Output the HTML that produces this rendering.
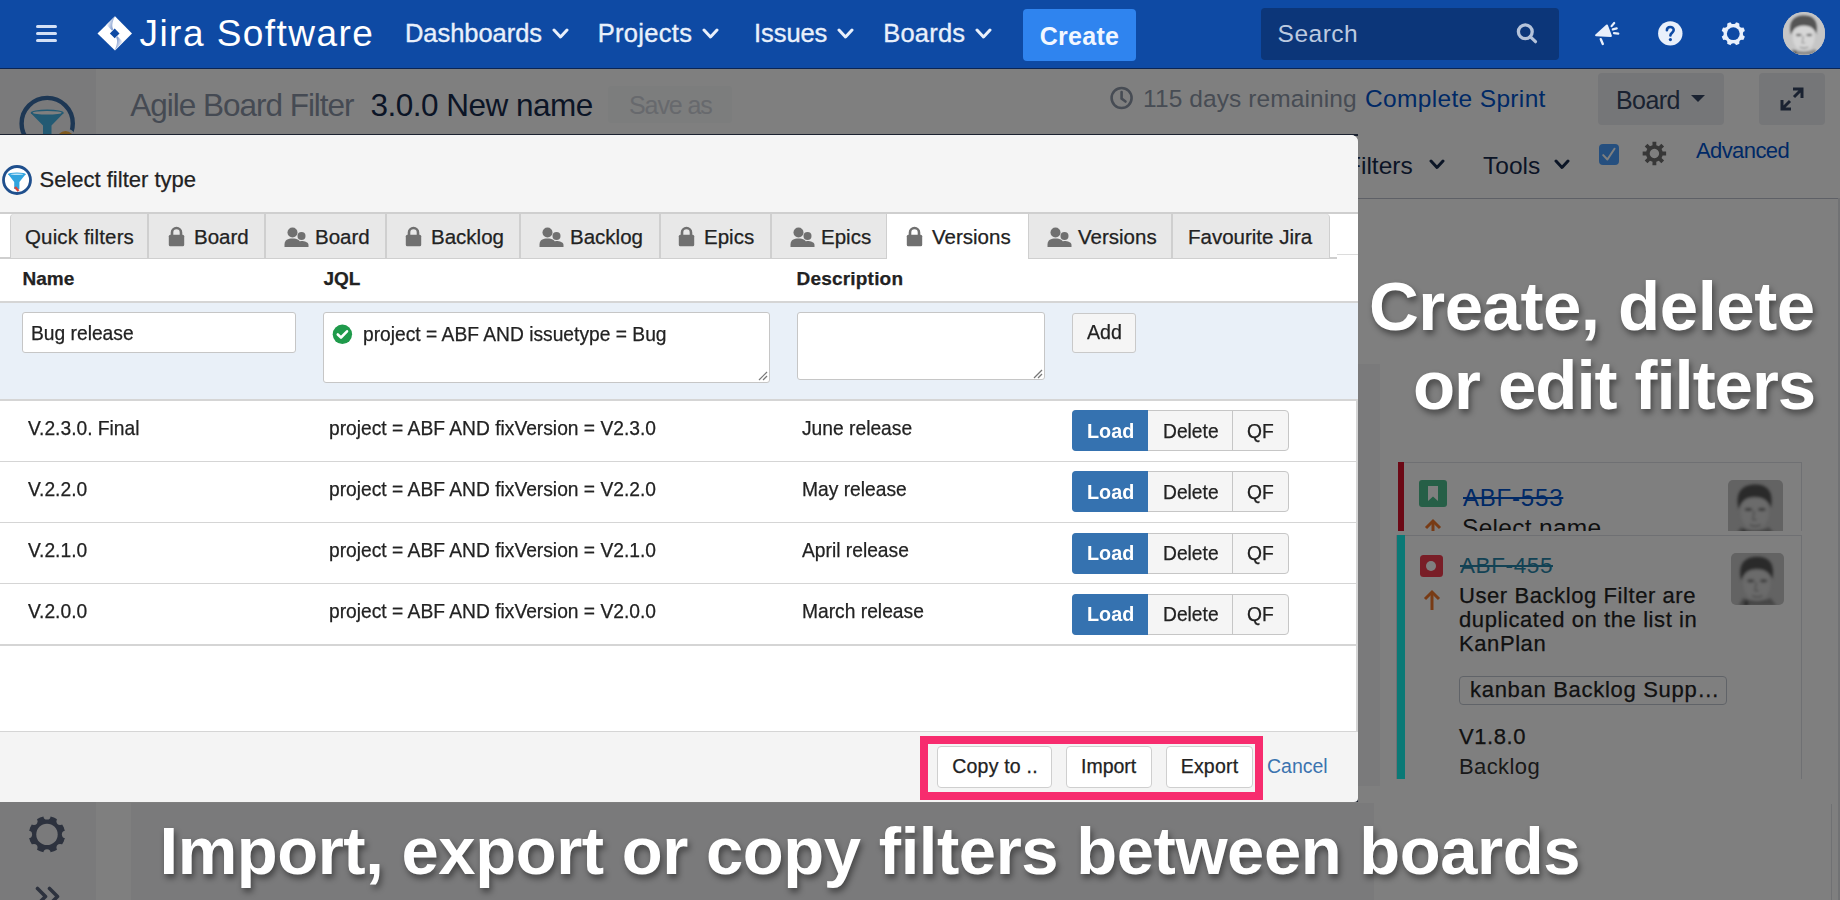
<!DOCTYPE html>
<html><head><meta charset="utf-8">
<style>
*{box-sizing:border-box;margin:0;padding:0}
html,body{width:1840px;height:900px;overflow:hidden;background:#fff;font-family:"Liberation Sans",sans-serif}
.t{position:absolute;line-height:1;white-space:nowrap}
.d .t, .t.d{-webkit-text-stroke:0.25px currentColor}
.r{position:absolute;display:block}
</style></head><body>
<div class="r" style="left:0px;top:69px;width:1840px;height:831px;background:#fff"></div>
<div class="r" style="left:0px;top:69px;width:96px;height:831px;background:#f4f5f7"></div>
<svg class="r" style="left:14px;top:90px;" width="70" height="50" viewBox="0 0 70 50"><circle cx="33.2" cy="33.5" r="25.6" fill="none" stroke="#3b6ea8" stroke-width="4.4"/><path d="M16.7,23 L49.7,23 L37.5,35.5 L37.5,50 L29,50 L29,35.5 Z" fill="#46b4e6"/><ellipse cx="33.2" cy="22.8" rx="16.5" ry="3.2" fill="#46b4e6"/><ellipse cx="33.2" cy="22.8" rx="14.5" ry="1.8" fill="#fff"/><circle cx="51.5" cy="49.5" r="9.8" fill="#ffb43c" stroke="#f4f5f7" stroke-width="2.5"/><path d="M29,44 L34,50 L29,50 Z" fill="#e8503a"/></svg>
<div class="t" style="left:130.3px;top:89.94px;font-size:31.5px;color:#8b95a6;font-weight:normal;letter-spacing:-1.02px;">Agile Board Filter</div>
<div class="t" style="left:370.5px;top:89.94px;font-size:31.5px;color:#172b4d;font-weight:normal;letter-spacing:-0.5px;">3.0.0 New name</div>
<div class="r" style="left:608px;top:86px;width:124px;height:37px;background:#f9fafb;border-radius:3px"></div>
<div class="t" style="left:629px;top:93.44px;font-size:25px;color:#cfd3da;font-weight:normal;letter-spacing:-1.1px;">Save as</div>
<svg class="r" style="left:1108px;top:85px;" width="28" height="26" viewBox="0 0 28 26"><circle cx="13.6" cy="13" r="10" fill="none" stroke="#8e98a8" stroke-width="2.6"/><polyline points="13.6,7 13.6,13.5 17.5,16.5" fill="none" stroke="#8e98a8" stroke-width="2.6" stroke-linecap="round"/></svg>
<div class="t" style="left:1143px;top:87.06px;font-size:24.5px;color:#8e98a8;font-weight:normal;letter-spacing:0.1px;">115 days remaining</div>
<div class="t" style="left:1365px;top:87.06px;font-size:24.5px;color:#0052cc;font-weight:normal;letter-spacing:0.34px;">Complete Sprint</div>
<div class="r" style="left:1598px;top:73px;width:126px;height:52px;background:#ebecf0;border-radius:4px"></div>
<div class="t" style="left:1616px;top:88.34px;font-size:25px;color:#344563;font-weight:normal;letter-spacing:-0.6px;">Board</div>
<svg class="r" style="left:1690px;top:94px;" width="16" height="9" viewBox="0 0 16 9"><polygon points="1,1 15,1 8,8" fill="#344563"/></svg>
<div class="r" style="left:1759px;top:73px;width:66px;height:52px;background:#ebecf0;border-radius:4px"></div>
<svg class="r" style="left:1778px;top:85px;" width="28" height="28" viewBox="0 0 28 28"><path d="M15,4 L24,4 L24,13 M24,4 L16,12 M4,15 L4,24 L13,24 M4,24 L12,16" fill="none" stroke="#344563" stroke-width="3"/></svg>
<div class="t" style="left:1346px;top:153.76px;font-size:24.5px;color:#172b4d;font-weight:normal;">Filters</div>
<svg class="r" style="left:1429px;top:159px;" width="16" height="11" viewBox="0 0 16 11"><polyline points="2,2 8.0,8.5 14,2" fill="none" stroke="#172b4d" stroke-width="3" stroke-linecap="round" stroke-linejoin="round"/></svg>
<div class="t" style="left:1483px;top:153.76px;font-size:24.5px;color:#172b4d;font-weight:normal;">Tools</div>
<svg class="r" style="left:1554px;top:159px;" width="16" height="11" viewBox="0 0 16 11"><polyline points="2,2 8.0,8.5 14,2" fill="none" stroke="#172b4d" stroke-width="3" stroke-linecap="round" stroke-linejoin="round"/></svg>
<div class="r" style="left:1598.8px;top:143.8px;width:20.6px;height:21.1px;background:#4a9fff;border-radius:4px"></div>
<svg class="r" style="left:1598px;top:143px;" width="22" height="22" viewBox="0 0 22 22"><polyline points="5.2,12.1 9.4,16.5 16.5,5.7" fill="none" stroke="#fff" stroke-width="2" stroke-linecap="round" stroke-linejoin="round"/></svg>
<svg class="r" style="left:1641px;top:140px;" width="27" height="27" viewBox="0 0 27 27"><path d="M21.16,10.29 L21.58,11.60 L25.14,11.55 L25.14,15.45 L21.58,15.40 L21.16,16.71 L20.53,17.95 L23.08,20.42 L20.32,23.18 L17.85,20.63 L16.61,21.26 L15.30,21.68 L15.35,25.24 L11.45,25.24 L11.50,21.68 L10.19,21.26 L8.95,20.63 L6.48,23.18 L3.72,20.42 L6.27,17.95 L5.64,16.71 L5.22,15.40 L1.66,15.45 L1.66,11.55 L5.22,11.60 L5.64,10.29 L6.27,9.05 L3.72,6.58 L6.48,3.82 L8.95,6.37 L10.19,5.74 L11.50,5.32 L11.45,1.76 L15.35,1.76 L15.30,5.32 L16.61,5.74 L17.85,6.37 L20.32,3.82 L23.08,6.58 L20.53,9.05 Z M13.4,8.8 A4.7,4.7 0 1,0 13.41,8.8 Z" fill="#6e6e6e" fill-rule="evenodd"/></svg>
<div class="t" style="left:1696px;top:139.78px;font-size:22px;color:#0052cc;font-weight:normal;letter-spacing:-0.6px;">Advanced</div>
<div class="r" style="left:1357px;top:364px;width:23px;height:422px;background:#f4f5f7"></div>
<div class="r" style="left:1380px;top:198px;width:460px;height:588px;background:#fff"></div>
<div class="r" style="left:1357px;top:197.5px;width:483px;height:1.5px;background:#bcc1cc"></div>
<div class="r" style="left:1398px;top:462px;width:404px;height:69px;background:#fff;border:1px solid #dfe1e6;border-bottom:none"></div>
<div class="r" style="left:1398px;top:462px;width:6px;height:69px;background:#d8102a"></div>
<div class="r" style="left:1419px;top:480px;width:28px;height:27px;background:#4cbf8f;border-radius:3px"></div>
<svg class="r" style="left:1419px;top:480px;" width="28" height="27" viewBox="0 0 28 27"><path d="M9,6 L19,6 L19,21 L14,16.5 L9,21 Z" fill="#fff"/></svg>
<div class="t" style="left:1463px;top:485.68px;font-size:24px;color:#0052cc;font-weight:normal;letter-spacing:0.8px;text-decoration:line-through;">ABF-553</div>
<svg class="r" style="left:1422px;top:517px;" width="22" height="14" viewBox="0 0 22 14"><polyline points="4,11 11,4 18,11" fill="none" stroke="#f0772a" stroke-width="3"/><line x1="11" y1="4" x2="11" y2="20" stroke="#f0772a" stroke-width="3"/></svg>
<div class="r" style="left:1462px;top:517px;width:250px;height:14px;overflow:hidden"><div class="t" style="left:0;top:-1px;font-size:24.5px;color:#222;letter-spacing:0.3px">Select name</div></div>
<div class="r" style="left:1728px;top:480px;width:55px;height:51px;overflow:hidden;border-radius:5px 5px 0 0"><div style="width:55px;height:55px"><svg width="55" height="55" viewBox="0 0 43 43" preserveAspectRatio="xMidYMid slice" style="display:block"><defs><filter id="avb1" x="-20%" y="-20%" width="140%" height="140%"><feGaussianBlur stdDeviation="1.3"/></filter></defs><rect width="43" height="43" fill="#c6c6c6"/><g filter="url(#avb1)"><ellipse cx="21" cy="25" rx="11" ry="14" fill="#d6d6d6"/><path d="M8.5,23 C5,10 11,3.5 21,3.5 C31,3.5 36,9 33.5,22 C32,17 28,13.5 21,13.5 C14,13.5 10,17 8.5,23 Z" fill="#555"/><ellipse cx="16" cy="23" rx="3" ry="1.3" fill="#6e6e6e"/><ellipse cx="26.5" cy="23" rx="3" ry="1.3" fill="#6e6e6e"/><path d="M20.5,24 L19.5,31 L22.5,31" stroke="#999" stroke-width="1.2" fill="none"/><path d="M17,35 C19.5,36.5 23,36.5 25.5,35" stroke="#8a8a8a" stroke-width="1.3" fill="none"/><path d="M6,43 L10,37 C15,40 27,40 32,37 L37,43 Z" fill="#8c8c8c"/><path d="M10,43 L12.5,38 L14.5,43 Z" fill="#444"/></g></svg></div></div>
<div class="r" style="left:1396px;top:535px;width:406px;height:244px;background:#fff;border:1px solid #dfe1e6;border-bottom:none"></div>
<div class="r" style="left:1397px;top:535px;width:8px;height:244px;background:#14f2ec"></div>
<div class="r" style="left:1420px;top:554.5px;width:22.5px;height:22.5px;background:#f23c4e;border-radius:3.5px"></div>
<div class="r" style="left:1426px;top:561px;width:10px;height:10px;background:#fff;border-radius:50%"></div>
<div class="t" style="left:1460px;top:554.95px;font-size:22.5px;color:#2684a8;font-weight:normal;letter-spacing:0.6px;text-decoration:line-through;">ABF-455</div>
<svg class="r" style="left:1422px;top:589px;" width="20" height="22" viewBox="0 0 20 22"><polyline points="3,10 10,3 17,10" fill="none" stroke="#f0772a" stroke-width="3"/><line x1="10" y1="3" x2="10" y2="21" stroke="#f0772a" stroke-width="3"/></svg>
<div class="t d" style="left:1459px;top:585.38px;font-size:22px;color:#222;font-weight:normal;letter-spacing:0.58px;">User Backlog Filter are</div>
<div class="t d" style="left:1459px;top:609.38px;font-size:22px;color:#222;font-weight:normal;letter-spacing:0.58px;">duplicated on the list in</div>
<div class="t d" style="left:1459px;top:633.38px;font-size:22px;color:#222;font-weight:normal;letter-spacing:0.58px;">KanPlan</div>
<div class="r" style="left:1731px;top:553px;width:53px;height:52px;overflow:hidden;border-radius:5px"><svg width="53" height="52" viewBox="0 0 43 43" preserveAspectRatio="xMidYMid slice" style="display:block"><defs><filter id="avb2" x="-20%" y="-20%" width="140%" height="140%"><feGaussianBlur stdDeviation="1.3"/></filter></defs><rect width="43" height="43" fill="#c6c6c6"/><g filter="url(#avb2)"><ellipse cx="21" cy="25" rx="11" ry="14" fill="#d6d6d6"/><path d="M8.5,23 C5,10 11,3.5 21,3.5 C31,3.5 36,9 33.5,22 C32,17 28,13.5 21,13.5 C14,13.5 10,17 8.5,23 Z" fill="#555"/><ellipse cx="16" cy="23" rx="3" ry="1.3" fill="#6e6e6e"/><ellipse cx="26.5" cy="23" rx="3" ry="1.3" fill="#6e6e6e"/><path d="M20.5,24 L19.5,31 L22.5,31" stroke="#999" stroke-width="1.2" fill="none"/><path d="M17,35 C19.5,36.5 23,36.5 25.5,35" stroke="#8a8a8a" stroke-width="1.3" fill="none"/><path d="M6,43 L10,37 C15,40 27,40 32,37 L37,43 Z" fill="#8c8c8c"/><path d="M10,43 L12.5,38 L14.5,43 Z" fill="#444"/></g></svg></div>
<div class="r" style="left:1459px;top:676px;width:268px;height:29px;background:#fff;border:1.5px solid #c1c7d0;border-radius:4px"></div>
<div class="t d" style="left:1470px;top:679.38px;font-size:22px;color:#222;font-weight:normal;letter-spacing:0.7px;">kanban Backlog Supp…</div>
<div class="t d" style="left:1459px;top:726.18px;font-size:22px;color:#222;font-weight:normal;letter-spacing:0.58px;">V1.8.0</div>
<div class="r" style="left:1459px;top:750px;width:200px;height:29px;overflow:hidden"><div class="t" style="left:0;top:6.4px;font-size:22px;color:#333;letter-spacing:0.4px">Backlog</div></div>
<div class="r" style="left:1838px;top:198px;width:1.5px;height:702px;background:#e2e4e8"></div>
<div class="r" style="left:131px;top:803px;width:1243px;height:97px;background:#f4f5f7"></div>
<div class="r" style="left:1831px;top:804px;width:1.2px;height:96px;background:#e0e2e6"></div>
<svg class="r" style="left:27px;top:814px;" width="40" height="40" viewBox="0 0 40 40"><defs><mask id="gm1"><rect x="0" y="0" width="200" height="200" fill="#fff"/><circle cx="20.00" cy="1.90" r="3.6" fill="#000"/><circle cx="33.08" cy="7.32" r="3.6" fill="#000"/><circle cx="38.50" cy="20.40" r="3.6" fill="#000"/><circle cx="33.08" cy="33.48" r="3.6" fill="#000"/><circle cx="20.00" cy="38.90" r="3.6" fill="#000"/><circle cx="6.92" cy="33.48" r="3.6" fill="#000"/><circle cx="1.50" cy="20.40" r="3.6" fill="#000"/><circle cx="6.92" cy="7.32" r="3.6" fill="#000"/><circle cx="20" cy="20.4" r="10.7" fill="#000"/></mask></defs><circle cx="20" cy="20.4" r="18.2" fill="#5a647c" mask="url(#gm1)"/></svg>
<svg class="r" style="left:33px;top:884px;" width="30" height="16" viewBox="0 0 30 16"><polyline points="4.5,4.5 12.5,12.5 4.5,20.5" fill="none" stroke="#5a647c" stroke-width="3.6" stroke-linecap="round" stroke-linejoin="round"/><polyline points="16.5,4.5 24.5,12.5 16.5,20.5" fill="none" stroke="#5a647c" stroke-width="3.6" stroke-linecap="round" stroke-linejoin="round"/></svg>
<div class="r" style="left:0px;top:69px;width:1840px;height:831px;background:rgba(0,0,0,0.5)"></div>
<div class="r" style="left:0px;top:0px;width:1840px;height:69px;background:#0e4aa4;border-bottom:1px solid #0b2553"></div>
<div class="r" style="left:36px;top:25px;width:21px;height:3.4px;background:#d3e0f6;border-radius:2px"></div>
<div class="r" style="left:36px;top:32px;width:21px;height:3.4px;background:#d3e0f6;border-radius:2px"></div>
<div class="r" style="left:36px;top:39px;width:21px;height:3.4px;background:#d3e0f6;border-radius:2px"></div>
<svg class="r" style="left:96px;top:15px;" width="38" height="38" viewBox="0 0 38 38"><defs><linearGradient id="lg1" gradientUnits="userSpaceOnUse" x1="17.5" y1="11" x2="10.5" y2="9"><stop offset="0" stop-color="#7d98cc"/><stop offset="1" stop-color="#fff"/></linearGradient><linearGradient id="lg2" gradientUnits="userSpaceOnUse" x1="19.9" y1="25.8" x2="26.9" y2="27.8"><stop offset="0" stop-color="#7d98cc"/><stop offset="1" stop-color="#fff"/></linearGradient></defs><polygon points="19,1.2 36,18.4 19,35.6 1.5,18.4" fill="#fff"/><path d="M19,1.2 L10.5,9.7 L15.9,15.6 L17.2,14.3 C16,12 15.5,8 19,1.2 Z" fill="url(#lg1)"/><path d="M18.4,35.6 L26.9,27.1 L21.5,21.2 L20.2,22.5 C21.4,24.8 21.9,28.8 18.4,35.6 Z" fill="url(#lg2)"/><polygon points="18.7,13.6 23.5,18.4 18.7,23.2 13.9,18.4" fill="#0e4aa4"/></svg>
<div class="t" style="left:139.5px;top:15.28px;font-size:37px;color:#fff;font-weight:normal;letter-spacing:1.45px;">Jira Software</div>
<div class="t" style="left:405px;top:21.11px;font-size:25.5px;color:#e9f0fb;font-weight:normal;letter-spacing:-0.05px;-webkit-text-stroke:0.35px #e9f0fb;">Dashboards</div>
<svg class="r" style="left:552px;top:27.5px;" width="17" height="11.5" viewBox="0 0 17 11.5"><polyline points="2,2 8.5,9.0 15,2" fill="none" stroke="#e9f0fb" stroke-width="3" stroke-linecap="round" stroke-linejoin="round"/></svg>
<div class="t" style="left:597.7px;top:21.11px;font-size:25.5px;color:#e9f0fb;font-weight:normal;letter-spacing:0.3px;-webkit-text-stroke:0.35px #e9f0fb;">Projects</div>
<svg class="r" style="left:702px;top:27.5px;" width="17" height="11.5" viewBox="0 0 17 11.5"><polyline points="2,2 8.5,9.0 15,2" fill="none" stroke="#e9f0fb" stroke-width="3" stroke-linecap="round" stroke-linejoin="round"/></svg>
<div class="t" style="left:754.1px;top:21.11px;font-size:25.5px;color:#e9f0fb;font-weight:normal;letter-spacing:-0.1px;-webkit-text-stroke:0.35px #e9f0fb;">Issues</div>
<svg class="r" style="left:837px;top:27.5px;" width="17" height="11.5" viewBox="0 0 17 11.5"><polyline points="2,2 8.5,9.0 15,2" fill="none" stroke="#e9f0fb" stroke-width="3" stroke-linecap="round" stroke-linejoin="round"/></svg>
<div class="t" style="left:883.3px;top:21.11px;font-size:25.5px;color:#e9f0fb;font-weight:normal;letter-spacing:0.18px;-webkit-text-stroke:0.35px #e9f0fb;">Boards</div>
<svg class="r" style="left:975px;top:27.5px;" width="17" height="11.5" viewBox="0 0 17 11.5"><polyline points="2,2 8.5,9.0 15,2" fill="none" stroke="#e9f0fb" stroke-width="3" stroke-linecap="round" stroke-linejoin="round"/></svg>
<div class="r" style="left:1023px;top:9px;width:113px;height:52px;background:#2f84ef;border-radius:4px"></div>
<div class="t" style="left:1039.7px;top:24.34px;font-size:25px;color:#f2f7ff;font-weight:bold;letter-spacing:0.3px;">Create</div>
<div class="r" style="left:1261px;top:8px;width:298px;height:52px;background:#0c3679;border-radius:4px"></div>
<div class="t" style="left:1277.6px;top:22.36px;font-size:24.5px;color:#bccae0;font-weight:normal;letter-spacing:0.5px;">Search</div>
<svg class="r" style="left:1514px;top:23px;" width="26" height="24" viewBox="0 0 26 24"><circle cx="11.3" cy="8.7" r="6.9" fill="none" stroke="#b5c3da" stroke-width="3.3"/><line x1="16.2" y1="13.6" x2="21.5" y2="18.7" stroke="#b5c3da" stroke-width="3.2" stroke-linecap="round"/></svg>
<svg class="r" style="left:1593px;top:20px;" width="30" height="28" viewBox="0 0 30 28"><path d="M3.2,15.2 L13.9,5.6 L17.8,16 Z" fill="#e9f0fb" stroke="#e9f0fb" stroke-width="2.2" stroke-linejoin="round"/><line x1="7.8" y1="19.2" x2="9.8" y2="24" stroke="#e9f0fb" stroke-width="2.4" stroke-linecap="round"/><line x1="18.6" y1="6.1" x2="21.2" y2="3" stroke="#e9f0fb" stroke-width="2.2" stroke-linecap="round"/><line x1="19.8" y1="9.4" x2="23.7" y2="8.4" stroke="#e9f0fb" stroke-width="2.2" stroke-linecap="round"/><line x1="21" y1="13.1" x2="25.3" y2="13.7" stroke="#e9f0fb" stroke-width="2.2" stroke-linecap="round"/></svg>
<svg class="r" style="left:1656px;top:19px;" width="29" height="29" viewBox="0 0 29 29"><circle cx="14.3" cy="14.4" r="12.2" fill="#e9f0fb"/><path d="M10.9,11.3 C10.9,7 17.7,7 17.7,11.1 C17.7,13.6 14.4,13.8 14.4,16.5" fill="none" stroke="#0e4aa4" stroke-width="2.6" stroke-linecap="round"/><circle cx="14.4" cy="20.6" r="1.6" fill="#0e4aa4"/></svg>
<svg class="r" style="left:1719px;top:19px;" width="29" height="29" viewBox="0 0 29 29"><defs><mask id="gm2"><rect x="0" y="0" width="200" height="200" fill="#fff"/><circle cx="14.30" cy="2.40" r="2.7" fill="#000"/><circle cx="23.00" cy="6.00" r="2.7" fill="#000"/><circle cx="26.60" cy="14.70" r="2.7" fill="#000"/><circle cx="23.00" cy="23.40" r="2.7" fill="#000"/><circle cx="14.30" cy="27.00" r="2.7" fill="#000"/><circle cx="5.60" cy="23.40" r="2.7" fill="#000"/><circle cx="2.00" cy="14.70" r="2.7" fill="#000"/><circle cx="5.60" cy="6.00" r="2.7" fill="#000"/><circle cx="14.3" cy="14.7" r="6.4" fill="#000"/></mask></defs><circle cx="14.3" cy="14.7" r="11.8" fill="#e9f0fb" mask="url(#gm2)"/></svg>
<div class="r" style="left:1782.5px;top:11.7px;width:42.5px;height:43px;border-radius:50%;overflow:hidden;background:#c6c6c6"><svg width="42.5" height="43" viewBox="0 0 43 43" preserveAspectRatio="xMidYMid slice" style="display:block"><defs><filter id="avb3" x="-20%" y="-20%" width="140%" height="140%"><feGaussianBlur stdDeviation="1.3"/></filter></defs><rect width="43" height="43" fill="#c6c6c6"/><g filter="url(#avb3)"><ellipse cx="21" cy="25" rx="11" ry="14" fill="#d6d6d6"/><path d="M8.5,23 C5,10 11,3.5 21,3.5 C31,3.5 36,9 33.5,22 C32,17 28,13.5 21,13.5 C14,13.5 10,17 8.5,23 Z" fill="#555"/><ellipse cx="16" cy="23" rx="3" ry="1.3" fill="#6e6e6e"/><ellipse cx="26.5" cy="23" rx="3" ry="1.3" fill="#6e6e6e"/><path d="M20.5,24 L19.5,31 L22.5,31" stroke="#999" stroke-width="1.2" fill="none"/><path d="M17,35 C19.5,36.5 23,36.5 25.5,35" stroke="#8a8a8a" stroke-width="1.3" fill="none"/><path d="M6,43 L10,37 C15,40 27,40 32,37 L37,43 Z" fill="#8c8c8c"/><path d="M10,43 L12.5,38 L14.5,43 Z" fill="#444"/></g></svg></div>
<div class="r" style="left:0px;top:134px;width:1358px;height:1.5px;background:#1b2230"></div>
<div class="r" style="left:0;top:135px;width:1358px;height:667px;background:#fff;border-top-right-radius:7px;overflow:hidden">
</div>
<div class="r" style="left:0px;top:135px;width:1350px;height:77px;background:#f5f5f5"></div>
<div class="r" style="left:1350px;top:135px;width:8px;height:77px;background:#f5f5f5;border-top-right-radius:7px"></div>
<svg class="r" style="left:0px;top:163px;" width="34" height="34" viewBox="0 0 34 34"><circle cx="17" cy="17" r="13.5" fill="#fff" stroke="#1f4f8d" stroke-width="2.8"/><path d="M8,11 L25.8,11 L19.4,19 L19.4,26 L14.2,26 L14.2,19 Z" fill="#31a4df"/><ellipse cx="16.9" cy="11.3" rx="8.9" ry="1.8" fill="#31a4df"/><ellipse cx="16.9" cy="11.3" rx="6.5" ry="0.8" fill="#bfe4f7"/><line x1="15" y1="24" x2="18.5" y2="28" stroke="#d9463a" stroke-width="2.5"/></svg>
<div class="t d" style="left:39.5px;top:169.38px;font-size:22px;color:#222;font-weight:normal;">Select filter type</div>
<div class="r" style="left:0px;top:212px;width:1358px;height:1.5px;background:#cfcfcf"></div>
<div class="r" style="left:0px;top:257px;width:1337px;height:1.5px;background:#cfcfcf"></div>
<div class="r" style="left:1337px;top:254px;width:21px;height:1px;background:#dcdcdc"></div>
<div class="r" style="left:10px;top:214px;width:138px;height:44px;background:#e8e8e8;border-left:1px solid #cfcfcf;border-right:1px solid #cfcfcf;border-top-left-radius:4px;"></div>
<div class="t d" style="left:25px;top:226.65px;font-size:20.5px;color:#222;font-weight:normal;letter-spacing:0.15px;">Quick filters</div>
<div class="r" style="left:148px;top:214px;width:117px;height:44px;background:#e8e8e8;border-left:1px solid #cfcfcf;border-right:1px solid #cfcfcf;"></div>
<svg class="r" style="left:168px;top:226px;" width="17" height="21" viewBox="0 0 17 21"><path d="M4,9 L4,6.5 A4.5,4.5 0 0,1 13,6.5 L13,9" fill="none" stroke="#707070" stroke-width="2.6"/><rect x="0.8" y="8.8" width="15.4" height="11.4" rx="1.5" fill="#707070"/></svg>
<div class="t d" style="left:194px;top:226.65px;font-size:20.5px;color:#222;font-weight:normal;">Board</div>
<div class="r" style="left:265px;top:214px;width:121px;height:44px;background:#e8e8e8;border-left:1px solid #cfcfcf;border-right:1px solid #cfcfcf;"></div>
<svg class="r" style="left:284px;top:226px;" width="26" height="22" viewBox="0 0 26 22"><circle cx="8.5" cy="6.5" r="5" fill="#707070"/><path d="M0.5,21 L0.5,18.5 C0.5,14 4,12.5 8.5,12.5 C13,12.5 16.5,14 16.5,18.5 L16.5,21 Z" fill="#707070"/><circle cx="17.5" cy="10" r="4" fill="#707070"/><path d="M14,21 L14,18 C14,16 15,15 17.5,15 C20.5,15 24.5,16 24.5,19 L24.5,21 Z" fill="#707070"/></svg>
<div class="t d" style="left:315px;top:226.65px;font-size:20.5px;color:#222;font-weight:normal;">Board</div>
<div class="r" style="left:386px;top:214px;width:134px;height:44px;background:#e8e8e8;border-left:1px solid #cfcfcf;border-right:1px solid #cfcfcf;"></div>
<svg class="r" style="left:405px;top:226px;" width="17" height="21" viewBox="0 0 17 21"><path d="M4,9 L4,6.5 A4.5,4.5 0 0,1 13,6.5 L13,9" fill="none" stroke="#707070" stroke-width="2.6"/><rect x="0.8" y="8.8" width="15.4" height="11.4" rx="1.5" fill="#707070"/></svg>
<div class="t d" style="left:431px;top:226.65px;font-size:20.5px;color:#222;font-weight:normal;">Backlog</div>
<div class="r" style="left:520px;top:214px;width:140px;height:44px;background:#e8e8e8;border-left:1px solid #cfcfcf;border-right:1px solid #cfcfcf;"></div>
<svg class="r" style="left:539px;top:226px;" width="26" height="22" viewBox="0 0 26 22"><circle cx="8.5" cy="6.5" r="5" fill="#707070"/><path d="M0.5,21 L0.5,18.5 C0.5,14 4,12.5 8.5,12.5 C13,12.5 16.5,14 16.5,18.5 L16.5,21 Z" fill="#707070"/><circle cx="17.5" cy="10" r="4" fill="#707070"/><path d="M14,21 L14,18 C14,16 15,15 17.5,15 C20.5,15 24.5,16 24.5,19 L24.5,21 Z" fill="#707070"/></svg>
<div class="t d" style="left:570px;top:226.65px;font-size:20.5px;color:#222;font-weight:normal;">Backlog</div>
<div class="r" style="left:660px;top:214px;width:111px;height:44px;background:#e8e8e8;border-left:1px solid #cfcfcf;border-right:1px solid #cfcfcf;"></div>
<svg class="r" style="left:678px;top:226px;" width="17" height="21" viewBox="0 0 17 21"><path d="M4,9 L4,6.5 A4.5,4.5 0 0,1 13,6.5 L13,9" fill="none" stroke="#707070" stroke-width="2.6"/><rect x="0.8" y="8.8" width="15.4" height="11.4" rx="1.5" fill="#707070"/></svg>
<div class="t d" style="left:704px;top:226.65px;font-size:20.5px;color:#222;font-weight:normal;">Epics</div>
<div class="r" style="left:771px;top:214px;width:116px;height:44px;background:#e8e8e8;border-left:1px solid #cfcfcf;border-right:1px solid #cfcfcf;"></div>
<svg class="r" style="left:790px;top:226px;" width="26" height="22" viewBox="0 0 26 22"><circle cx="8.5" cy="6.5" r="5" fill="#707070"/><path d="M0.5,21 L0.5,18.5 C0.5,14 4,12.5 8.5,12.5 C13,12.5 16.5,14 16.5,18.5 L16.5,21 Z" fill="#707070"/><circle cx="17.5" cy="10" r="4" fill="#707070"/><path d="M14,21 L14,18 C14,16 15,15 17.5,15 C20.5,15 24.5,16 24.5,19 L24.5,21 Z" fill="#707070"/></svg>
<div class="t d" style="left:821px;top:226.65px;font-size:20.5px;color:#222;font-weight:normal;">Epics</div>
<div class="r" style="left:887px;top:214px;width:141px;height:45px;background:#fff;"></div>
<svg class="r" style="left:906px;top:226px;" width="17" height="21" viewBox="0 0 17 21"><path d="M4,9 L4,6.5 A4.5,4.5 0 0,1 13,6.5 L13,9" fill="none" stroke="#707070" stroke-width="2.6"/><rect x="0.8" y="8.8" width="15.4" height="11.4" rx="1.5" fill="#707070"/></svg>
<div class="t d" style="left:932px;top:226.65px;font-size:20.5px;color:#222;font-weight:normal;">Versions</div>
<div class="r" style="left:1028px;top:214px;width:144px;height:44px;background:#e8e8e8;border-left:1px solid #cfcfcf;border-right:1px solid #cfcfcf;"></div>
<svg class="r" style="left:1047px;top:226px;" width="26" height="22" viewBox="0 0 26 22"><circle cx="8.5" cy="6.5" r="5" fill="#707070"/><path d="M0.5,21 L0.5,18.5 C0.5,14 4,12.5 8.5,12.5 C13,12.5 16.5,14 16.5,18.5 L16.5,21 Z" fill="#707070"/><circle cx="17.5" cy="10" r="4" fill="#707070"/><path d="M14,21 L14,18 C14,16 15,15 17.5,15 C20.5,15 24.5,16 24.5,19 L24.5,21 Z" fill="#707070"/></svg>
<div class="t d" style="left:1078px;top:226.65px;font-size:20.5px;color:#222;font-weight:normal;">Versions</div>
<div class="r" style="left:1172px;top:214px;width:158px;height:44px;background:#e8e8e8;border-left:1px solid #cfcfcf;border-right:1px solid #cfcfcf;border-top-right-radius:4px;"></div>
<div class="t d" style="left:1188px;top:226.65px;font-size:20.5px;color:#222;font-weight:normal;">Favourite Jira</div>
<div class="t d" style="left:22.5px;top:268.62px;font-size:19px;color:#222;font-weight:bold;">Name</div>
<div class="t d" style="left:323.5px;top:268.62px;font-size:19px;color:#222;font-weight:bold;">JQL</div>
<div class="t d" style="left:796.5px;top:268.62px;font-size:19px;color:#222;font-weight:bold;letter-spacing:0.2px;">Description</div>
<div class="r" style="left:0px;top:301px;width:1358px;height:1.5px;background:#d5d5d5"></div>
<div class="r" style="left:0px;top:302.5px;width:1358px;height:97px;background:#e9f0f8"></div>
<div class="r" style="left:0px;top:399px;width:1358px;height:1.5px;background:#d5d5d5"></div>
<div class="r" style="left:22px;top:312px;width:274px;height:40.5px;background:#fff;border:1.2px solid #c6c6c6;border-radius:3px"></div>
<div class="t d" style="left:31px;top:323.32px;font-size:20.3px;color:#222;font-weight:normal;transform:scaleX(0.948);transform-origin:0 0;">Bug release</div>
<div class="r" style="left:323px;top:312px;width:447px;height:70.5px;background:#fff;border:1.2px solid #c6c6c6;border-radius:3px"></div>
<svg class="r" style="left:331px;top:323px;" width="23" height="23" viewBox="0 0 23 23"><circle cx="11.4" cy="11.3" r="9.7" fill="#1f9a4b"/><polyline points="6.8,11.5 10,14.5 16,8.3" fill="none" stroke="#fff" stroke-width="2.6" stroke-linecap="round" stroke-linejoin="round"/></svg>
<div class="t d" style="left:362.5px;top:324.32px;font-size:20.3px;color:#222;font-weight:normal;transform:scaleX(0.948);transform-origin:0 0;">project = ABF AND issuetype = Bug</div>
<div class="r" style="left:797px;top:312px;width:248px;height:68px;background:#fff;border:1.2px solid #c6c6c6;border-radius:3px"></div>
<svg class="r" style="left:757px;top:370px;" width="12" height="12" viewBox="0 0 12 12"><line x1="2" y1="10" x2="10" y2="2" stroke="#777" stroke-width="1.2"/><line x1="6" y1="10" x2="10" y2="6" stroke="#777" stroke-width="1.2"/></svg>
<svg class="r" style="left:1032px;top:367.5px;" width="12" height="12" viewBox="0 0 12 12"><line x1="2" y1="10" x2="10" y2="2" stroke="#777" stroke-width="1.2"/><line x1="6" y1="10" x2="10" y2="6" stroke="#777" stroke-width="1.2"/></svg>
<div class="r" style="left:1072px;top:313px;width:64px;height:39.5px;background:#f5f5f5;border:1px solid #c9c9c9;border-radius:3px"></div>
<div class="t d" style="left:1086.5px;top:322.32px;font-size:20.3px;color:#222;font-weight:normal;transform:scaleX(0.97);transform-origin:0 0;">Add</div>
<div class="t d" style="left:27.5px;top:417.82px;font-size:20.3px;color:#222;font-weight:normal;transform:scaleX(0.948);transform-origin:0 0;">V.2.3.0. Final</div>
<div class="t d" style="left:328.5px;top:417.82px;font-size:20.3px;color:#222;font-weight:normal;transform:scaleX(0.948);transform-origin:0 0;">project = ABF AND fixVersion = V2.3.0</div>
<div class="t d" style="left:802px;top:417.82px;font-size:20.3px;color:#222;font-weight:normal;transform:scaleX(0.948);transform-origin:0 0;">June release</div>
<div class="r" style="left:1072px;top:410.1px;width:217px;height:41px;background:#f5f5f5;border:1.3px solid #c6c6c6;border-radius:4px"></div>
<div class="r" style="left:1072px;top:410.1px;width:76px;height:41px;background:#3572b0;border-radius:4px 0 0 4px"></div>
<div class="r" style="left:1231.5px;top:410.1px;width:1.3px;height:41px;background:#c6c6c6"></div>
<div class="t" style="left:1087px;top:420.82px;font-size:20.3px;color:#fff;font-weight:bold;transform:scaleX(0.975);transform-origin:0 0;">Load</div>
<div class="t d" style="left:1162.5px;top:420.82px;font-size:20.3px;color:#222;font-weight:normal;transform:scaleX(0.948);transform-origin:0 0;">Delete</div>
<div class="t d" style="left:1246.5px;top:420.82px;font-size:20.3px;color:#222;font-weight:normal;transform:scaleX(0.948);transform-origin:0 0;">QF</div>
<div class="r" style="left:0px;top:460.7px;width:1358px;height:1.3px;background:#d5d5d5"></div>
<div class="t d" style="left:27.5px;top:479.02px;font-size:20.3px;color:#222;font-weight:normal;transform:scaleX(0.948);transform-origin:0 0;">V.2.2.0</div>
<div class="t d" style="left:328.5px;top:479.02px;font-size:20.3px;color:#222;font-weight:normal;transform:scaleX(0.948);transform-origin:0 0;">project = ABF AND fixVersion = V2.2.0</div>
<div class="t d" style="left:802px;top:479.02px;font-size:20.3px;color:#222;font-weight:normal;transform:scaleX(0.948);transform-origin:0 0;">May release</div>
<div class="r" style="left:1072px;top:471.3px;width:217px;height:41px;background:#f5f5f5;border:1.3px solid #c6c6c6;border-radius:4px"></div>
<div class="r" style="left:1072px;top:471.3px;width:76px;height:41px;background:#3572b0;border-radius:4px 0 0 4px"></div>
<div class="r" style="left:1231.5px;top:471.3px;width:1.3px;height:41px;background:#c6c6c6"></div>
<div class="t" style="left:1087px;top:482.02px;font-size:20.3px;color:#fff;font-weight:bold;transform:scaleX(0.975);transform-origin:0 0;">Load</div>
<div class="t d" style="left:1162.5px;top:482.02px;font-size:20.3px;color:#222;font-weight:normal;transform:scaleX(0.948);transform-origin:0 0;">Delete</div>
<div class="t d" style="left:1246.5px;top:482.02px;font-size:20.3px;color:#222;font-weight:normal;transform:scaleX(0.948);transform-origin:0 0;">QF</div>
<div class="r" style="left:0px;top:521.9px;width:1358px;height:1.3px;background:#d5d5d5"></div>
<div class="t d" style="left:27.5px;top:540.22px;font-size:20.3px;color:#222;font-weight:normal;transform:scaleX(0.948);transform-origin:0 0;">V.2.1.0</div>
<div class="t d" style="left:328.5px;top:540.22px;font-size:20.3px;color:#222;font-weight:normal;transform:scaleX(0.948);transform-origin:0 0;">project = ABF AND fixVersion = V2.1.0</div>
<div class="t d" style="left:802px;top:540.22px;font-size:20.3px;color:#222;font-weight:normal;transform:scaleX(0.948);transform-origin:0 0;">April release</div>
<div class="r" style="left:1072px;top:532.5px;width:217px;height:41px;background:#f5f5f5;border:1.3px solid #c6c6c6;border-radius:4px"></div>
<div class="r" style="left:1072px;top:532.5px;width:76px;height:41px;background:#3572b0;border-radius:4px 0 0 4px"></div>
<div class="r" style="left:1231.5px;top:532.5px;width:1.3px;height:41px;background:#c6c6c6"></div>
<div class="t" style="left:1087px;top:543.22px;font-size:20.3px;color:#fff;font-weight:bold;transform:scaleX(0.975);transform-origin:0 0;">Load</div>
<div class="t d" style="left:1162.5px;top:543.22px;font-size:20.3px;color:#222;font-weight:normal;transform:scaleX(0.948);transform-origin:0 0;">Delete</div>
<div class="t d" style="left:1246.5px;top:543.22px;font-size:20.3px;color:#222;font-weight:normal;transform:scaleX(0.948);transform-origin:0 0;">QF</div>
<div class="r" style="left:0px;top:583.1px;width:1358px;height:1.3px;background:#d5d5d5"></div>
<div class="t d" style="left:27.5px;top:601.42px;font-size:20.3px;color:#222;font-weight:normal;transform:scaleX(0.948);transform-origin:0 0;">V.2.0.0</div>
<div class="t d" style="left:328.5px;top:601.42px;font-size:20.3px;color:#222;font-weight:normal;transform:scaleX(0.948);transform-origin:0 0;">project = ABF AND fixVersion = V2.0.0</div>
<div class="t d" style="left:802px;top:601.42px;font-size:20.3px;color:#222;font-weight:normal;transform:scaleX(0.948);transform-origin:0 0;">March release</div>
<div class="r" style="left:1072px;top:593.7px;width:217px;height:41px;background:#f5f5f5;border:1.3px solid #c6c6c6;border-radius:4px"></div>
<div class="r" style="left:1072px;top:593.7px;width:76px;height:41px;background:#3572b0;border-radius:4px 0 0 4px"></div>
<div class="r" style="left:1231.5px;top:593.7px;width:1.3px;height:41px;background:#c6c6c6"></div>
<div class="t" style="left:1087px;top:604.42px;font-size:20.3px;color:#fff;font-weight:bold;transform:scaleX(0.975);transform-origin:0 0;">Load</div>
<div class="t d" style="left:1162.5px;top:604.42px;font-size:20.3px;color:#222;font-weight:normal;transform:scaleX(0.948);transform-origin:0 0;">Delete</div>
<div class="t d" style="left:1246.5px;top:604.42px;font-size:20.3px;color:#222;font-weight:normal;transform:scaleX(0.948);transform-origin:0 0;">QF</div>
<div class="r" style="left:0px;top:644.3000000000001px;width:1358px;height:1.3px;background:#d5d5d5"></div>
<div class="r" style="left:1356px;top:400px;width:2px;height:331px;background:#d5d5d5"></div>
<div class="r" style="left:0px;top:730.5px;width:1358px;height:1.5px;background:#d5d5d5"></div>
<div class="r" style="left:1353px;top:797px;width:5px;height:5px;background:#1b2230"></div>
<div class="r" style="left:0px;top:732px;width:1358px;height:70px;background:#f4f4f4;border-bottom-right-radius:4px"></div>
<div class="r" style="left:920px;top:735.5px;width:343px;height:64.5px;border:8px solid #f72c6e"></div>
<div class="r" style="left:937px;top:746px;width:115px;height:41.5px;background:#fff;border:1px solid #cfcfcf;border-radius:4px"></div>
<div class="t d" style="left:952.3px;top:757.49px;font-size:19.5px;color:#222;font-weight:normal;letter-spacing:0.2px;">Copy to ..</div>
<div class="r" style="left:1066px;top:746px;width:86px;height:41.5px;background:#fff;border:1px solid #cfcfcf;border-radius:4px"></div>
<div class="t d" style="left:1081px;top:757.49px;font-size:19.5px;color:#222;font-weight:normal;letter-spacing:0px;">Import</div>
<div class="r" style="left:1166px;top:746px;width:87px;height:41.5px;background:#fff;border:1px solid #cfcfcf;border-radius:4px"></div>
<div class="t d" style="left:1180.7px;top:757.49px;font-size:19.5px;color:#222;font-weight:normal;letter-spacing:0.2px;">Export</div>
<div class="t" style="left:1267px;top:757.49px;font-size:19.5px;color:#3b73af;font-weight:normal;">Cancel</div>
<div class="t" style="left:159.5px;top:817.28px;font-size:67px;color:#fff;font-weight:bold;letter-spacing:-0.45px;text-shadow:2px 4px 6px rgba(0,0,0,0.45);">Import, export or copy filters between boards</div>
<div class="t" style="left:1369px;top:272.09px;font-size:69px;color:#fff;font-weight:bold;letter-spacing:-0.5px;text-shadow:2px 4px 6px rgba(0,0,0,0.45);">Create, delete</div>
<div class="t" style="left:1413px;top:350.59px;font-size:69px;color:#fff;font-weight:bold;letter-spacing:-1.06px;text-shadow:2px 4px 6px rgba(0,0,0,0.45);">or edit filters</div>
</body></html>
